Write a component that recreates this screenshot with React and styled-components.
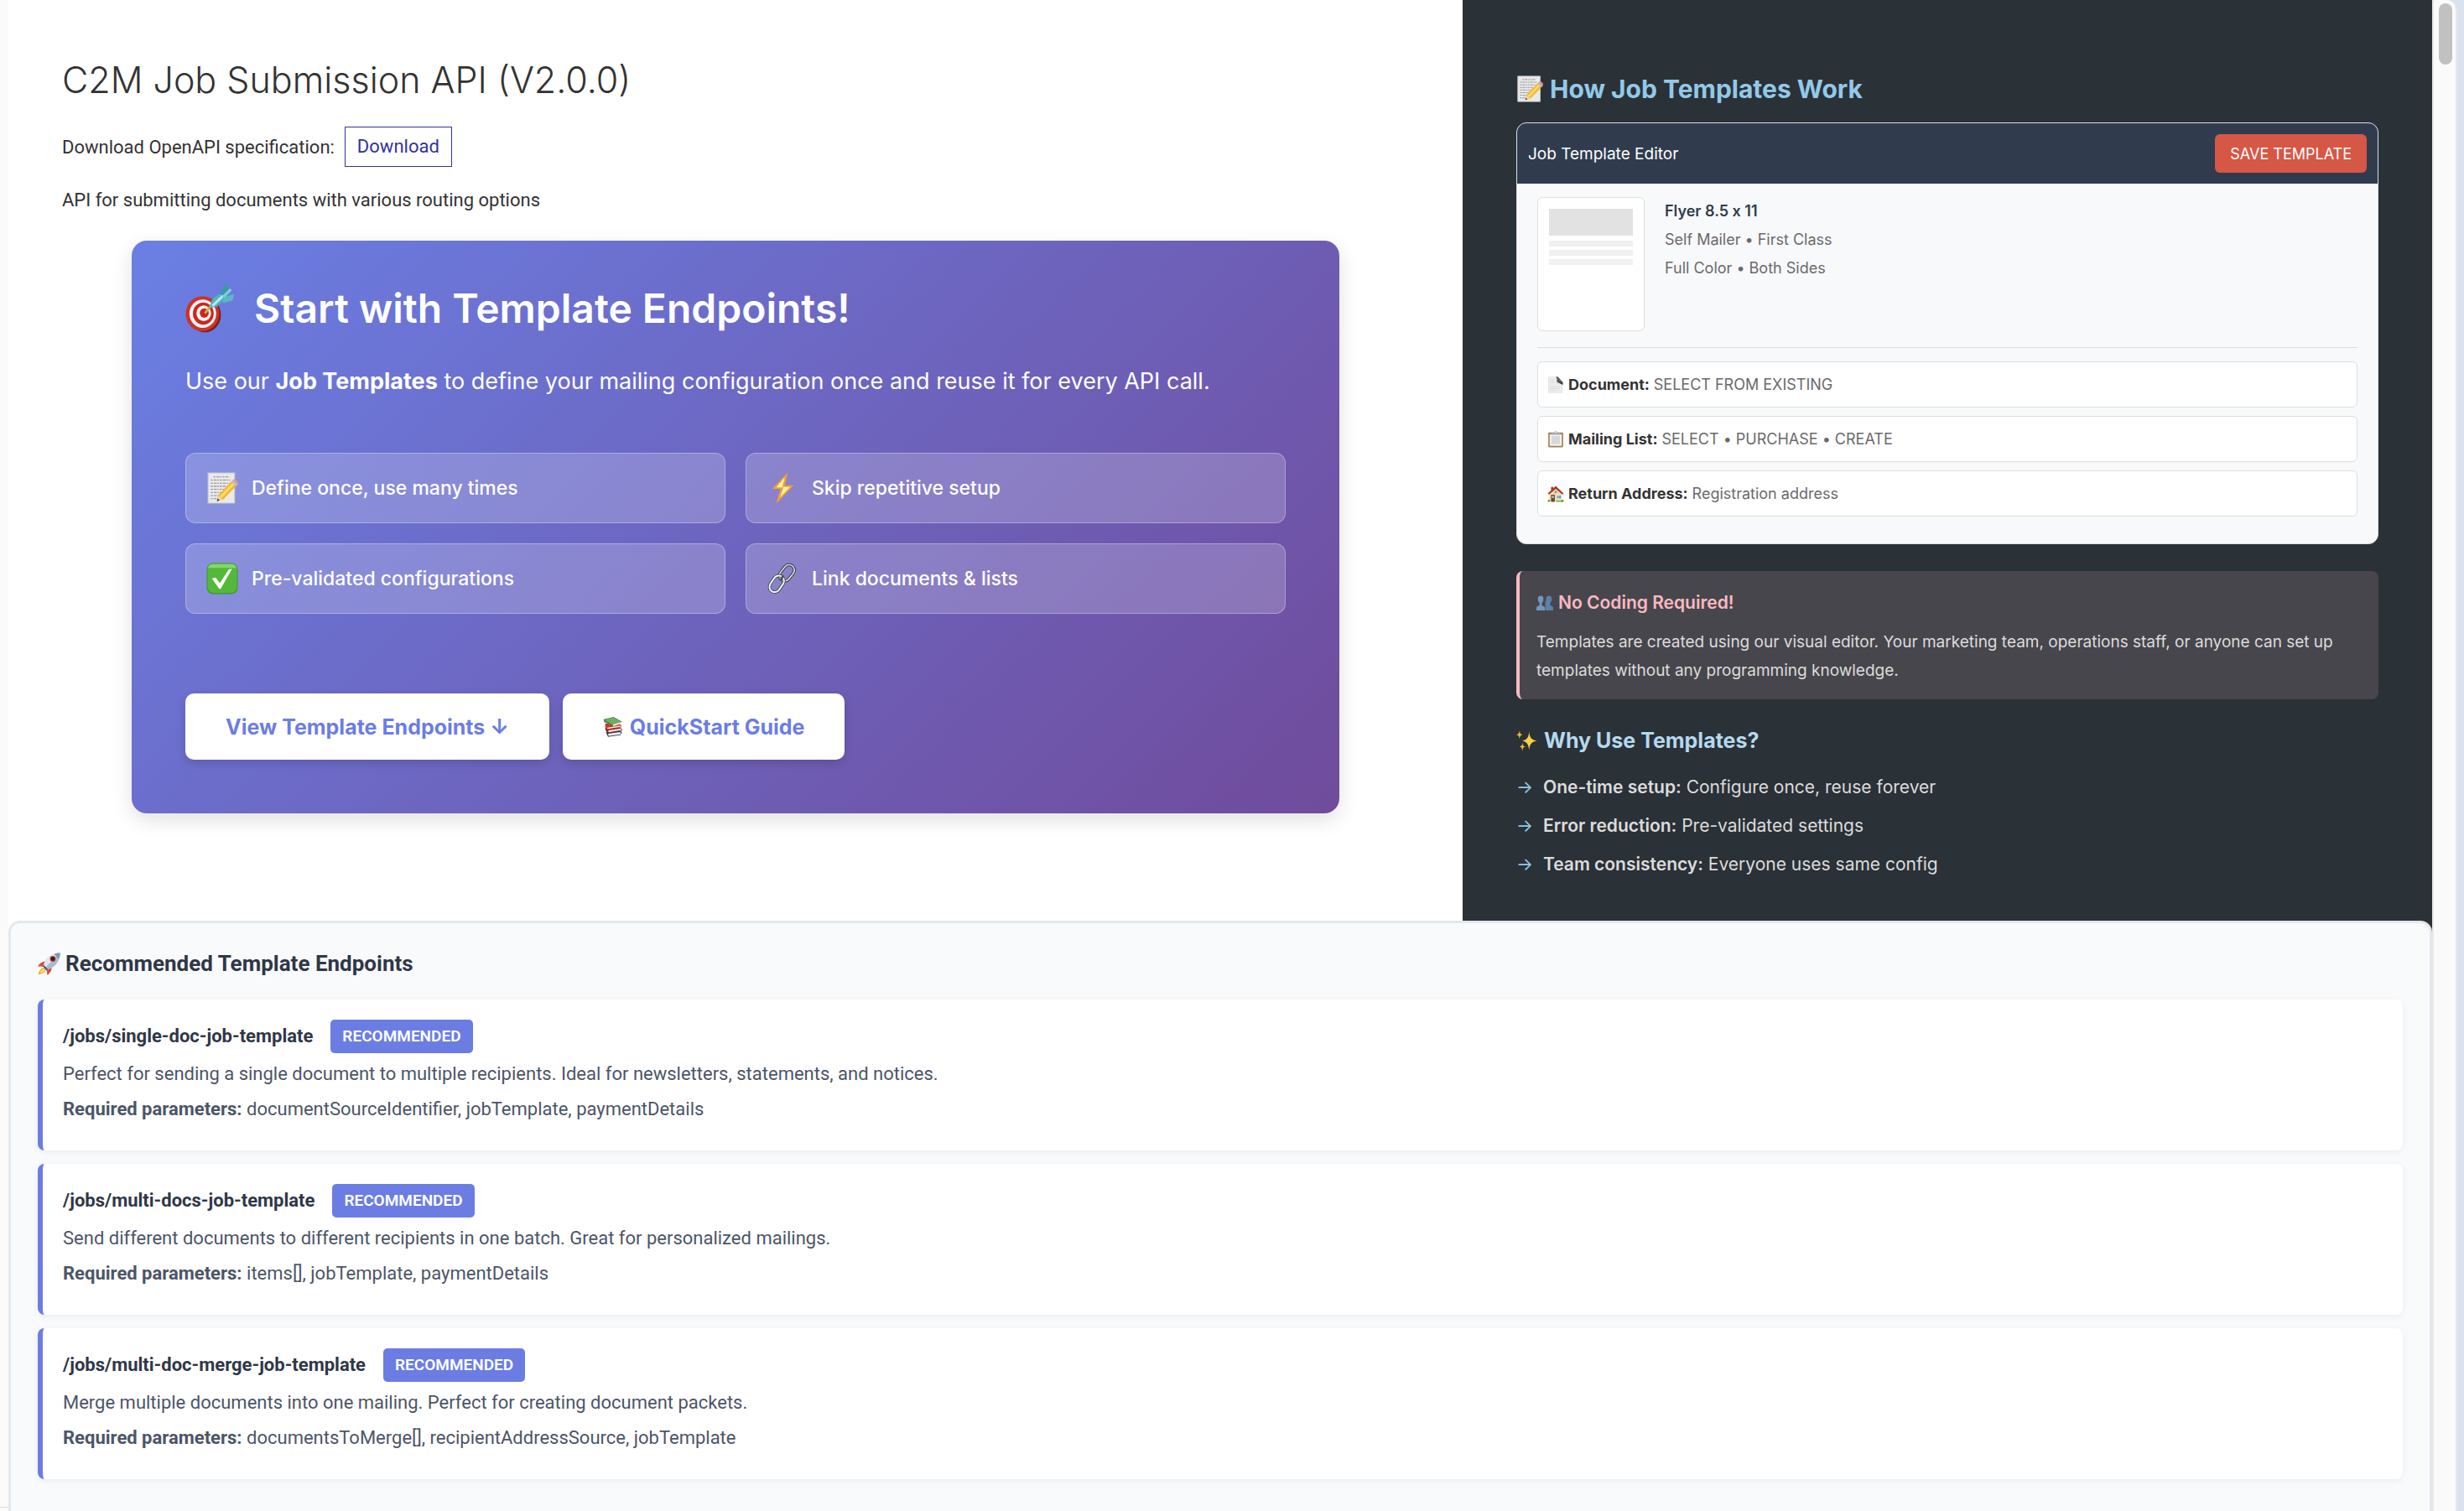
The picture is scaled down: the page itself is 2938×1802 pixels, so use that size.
import React from "react";
import styled, { createGlobalStyle } from "styled-components";

const sans = `Inter, "Liberation Sans", sans-serif`;
const roboto = `Roboto, "Liberation Sans", sans-serif`;

const GlobalStyle = createGlobalStyle`
  *, *::before, *::after { box-sizing: border-box; }
  html, body { margin: 0; padding: 0; }
  body { font-family: ${roboto}; color: #333; background: #fafafa; -webkit-font-smoothing: antialiased; }
  h1, h2, h3, p, ul { margin: 0; padding: 0; }
  ul { list-style: none; }
  a { text-decoration: none; }
`;

/* ---------- icons ---------- */

const Glyph = styled.svg.attrs({ viewBox: "0 0 36 36", "aria-hidden": true })`
  width: ${(p) => p.$size}px;
  height: ${(p) => p.$size}px;
  flex: none;
  display: block;
`;

const MemoIcon = ({ size }) => (
  <Glyph $size={size}>
    <path d="M2 1h30v34H2z" fill="#e9e9e9" stroke="#c9c9c9" strokeWidth="1" />
    <g stroke="#8b8b8b" strokeWidth="1" fill="none" strokeDasharray="2.4 1 3.4 .8 1.6 1">
      <path d="M8 5.500h18M5 9h22M5 12.500h21M5 16h17M5 19.500h15M5 23h14M5 26.500h11M5 30h8" />
    </g>
    <path d="M12 33l1.500-7L28 11l6 4.500L19 31z" fill="#f0b72f" />
    <path d="M15 27.500L29.500 12.500l2.200 1.600L17 29.500z" fill="#fbdc6a" />
    <path d="M12 33l1.500-7 5.500 5z" fill="#efcf9d" />
    <path d="M12 33l.7-3 2.300 1.900z" fill="#3a3532" />
    <path d="M28 11l2-2.200 6 4.600-2 2.200z" fill="#b8bcc0" />
    <path d="M30 8.800c1.800-2.600 7.300 1.400 5.800 4.400z" fill="#ee8b8f" />
  </Glyph>
);

const TargetIcon = ({ size }) => (
  <Glyph $size={size}>
    <ellipse cx="14.500" cy="22.600" rx="11.800" ry="13" fill="#7e1d18" />
    <ellipse cx="12.700" cy="21.800" rx="12.400" ry="13" fill="#cf3227" />
    <ellipse cx="12.900" cy="21.800" rx="9.900" ry="10.500" fill="#f7f3f1" />
    <ellipse cx="13.300" cy="21.700" rx="7.700" ry="8.200" fill="#c52a22" />
    <ellipse cx="13.600" cy="21.500" rx="5.400" ry="5.800" fill="#f7f3f1" />
    <ellipse cx="14" cy="21.300" rx="3.300" ry="3.500" fill="#c52a22" />
    <path d="M14.500 21.500L20 14.500" stroke="#d7b23b" strokeWidth="1.600" />
    <path d="M17.500 18l2.500-7 5.500-4 3 1.500-.5 3.500-4.500 4.500z" fill="#55b3bd" />
    <path d="M20 16l8-7.500" stroke="#b5eef0" strokeWidth="1.800" />
    <path d="M25.500 7.500L29 0l3.500 1.500-1 5.500z" fill="#3e98a4" />
    <path d="M28 9.500l8-2-1 4.500-7 2z" fill="#5bb9c2" />
    <path d="M27 9l6-6 1.500 1.500-5.500 5.500z" fill="#79cfd5" />
  </Glyph>
);

const BoltIcon = ({ size }) => (
  <Glyph $size={size}>
    <path d="M24 .5L6.500 19h9.300L11 35.500 30.500 15h-10z" fill="#f1a22f" />
    <path d="M20.500 6L11 17.200h8L15.500 28.500 26.500 16.800h-8.600z" fill="#fff2a0" />
  </Glyph>
);

const CheckIcon = ({ size }) => (
  <Glyph $size={size}>
    <rect x=".5" y=".5" width="35" height="35" rx="7" fill="#3f9a2c" />
    <rect x="1.500" y="1" width="33" height="33" rx="6.300" fill="#54b93a" />
    <path d="M7 2h22a5 5 0 0 1 5 4H2a5 5 0 0 1 5-4z" fill="#84d66b" />
    <path d="M25.500 7.500l3.500-.4-12.800 22.500h-1.600L6.500 18l4-1.300 4.700 6.500z" fill="#fff" />
  </Glyph>
);

const LinkIcon = ({ size }) => (
  <Glyph $size={size}>
    <g fill="none">
      <rect x="17" y="1.500" width="12" height="20" rx="6" transform="rotate(38 23 11.500)" stroke="#33363c" strokeWidth="3.400" />
      <rect x="17" y="1.500" width="12" height="20" rx="6" transform="rotate(38 23 11.500)" stroke="#d0dde5" strokeWidth="1.600" />
      <rect x="5.500" y="14" width="12" height="20" rx="6" transform="rotate(34 11.500 24)" stroke="#33363c" strokeWidth="3.400" />
      <rect x="5.500" y="14" width="12" height="20" rx="6" transform="rotate(34 11.500 24)" stroke="#e9f5fa" strokeWidth="2" />
      <path d="M16 20l3-5.500" stroke="#4a4d52" strokeWidth="2.500" />
    </g>
  </Glyph>
);

const BooksIcon = ({ size }) => (
  <Glyph $size={size}>
    <path d="M5 27l25-3 4 3.500-3 5-22 3z" fill="#27446f" />
    <path d="M9 30l22-3 1 4-22 3z" fill="#efe9de" />
    <path d="M4 19l22-3 8 5.500v3l-24 4.500-5-4z" fill="#8e2420" />
    <path d="M9.500 24l23-3.500v3L10 27.500z" fill="#f1ece2" />
    <path d="M4 12l24-1 5 4v3.500L8 23l-4-5z" fill="#c9372e" />
    <path d="M8 19l24-3.500v2L8 21.500z" fill="#efe9de" />
    <path d="M1 4L19 0l16 9-17 7.500L2 9z" fill="#4c8448" />
    <path d="M2 5l17-4 14 8-16 5z" fill="#72ab68" />
    <path d="M18 13.500l16-5v3L18 17z" fill="#eee9dc" />
  </Glyph>
);

const PageIcon = ({ size }) => (
  <Glyph $size={size}>
    <path d="M2 1h21l10 12v22H2z" fill="#dedede" />
    <path d="M3 2h17v14h12v18H3z" fill="#ececec" />
    <path d="M18 0c3 3 3 8 2 11l13 6V12L23 1z" fill="#5c5c5c" />
    <path d="M20 11l13 7V12z" fill="#3b3b3b" />
    <path d="M6 8h10M6 12h9M6 22h20M6 26h20M6 30h12" stroke="#cfcfcf" strokeWidth="1" />
  </Glyph>
);

const ClipboardIcon = ({ size }) => (
  <Glyph $size={size}>
    <rect x="2" y="3" width="32" height="32" rx="2" fill="#a58157" />
    <path d="M5 7h26v25H5z" fill="#f1f1ef" />
    <path d="M9 11h18v17H9z" fill="#d6d8da" />
    <path d="M8 4h6c0-5 8-5 8 0h6v4H8z" fill="#a7adb5" />
    <circle cx="18" cy="3" r="1.500" fill="#eef0f2" />
  </Glyph>
);

const HouseIcon = ({ size }) => (
  <Glyph $size={size}>
    <path d="M4 16L18 5l14 11v18H4z" fill="#f0d9a8" />
    <path d="M8 3h5v9H8z" fill="#8c4a38" />
    <path d="M1 17L18 1l17 16-2.500 2.500L18 7 3.500 19.500z" fill="#a93a2d" />
    <path d="M8 20h8v15H8z" fill="#71452b" />
    <path d="M10 22h4v5h-4z" fill="#a7cbe4" />
    <path d="M20 20h10v9H20z" fill="#fff" />
    <path d="M21 21h3.500v7H21zM25.500 21H29v7h-3.500z" fill="#5b93c7" />
    <circle cx="18" cy="14" r="2.500" fill="#5b93c7" />
    <circle cx="3.500" cy="33" r="2.500" fill="#5d9b3a" />
    <circle cx="32.500" cy="33" r="2.500" fill="#5d9b3a" />
    <path d="M19 33h14v2H19z" fill="#5d9b3a" />
  </Glyph>
);

const PeopleIcon = ({ size }) => (
  <Glyph $size={size}>
    <path d="M21 8c0-7 12-7 12 0 0 5-1.500 8-3.500 10.500V23l6.500 4v7H19V18.500z" fill="#5c80a6" />
    <path d="M3 8c0-7 12-7 12 0 0 5-1.500 8-3.500 10.500V23l6.500 4v7H0v-7l6.500-4v-4.500C4.500 16 3 13 3 8z" fill="#7297bd" />
  </Glyph>
);

const SparklesIcon = ({ size }) => (
  <Glyph $size={size}>
    <path d="M22 2c1 10 3.500 14 13.500 16C25.500 20 23 24 22 34c-1-10-3.500-14-12-16C18.500 16 21 12 22 2z" fill="#f8cf45" />
    <path d="M5.500 0c.6 5 1.700 6.500 5.500 7.500-3.800 1-4.900 2.500-5.500 7.500C4.900 10 3.800 8.500 0 7.500 3.800 6.500 4.900 5 5.500 0zM10.500 21c.6 5 1.500 6 5 7-3.500 1-4.400 2.500-5 7.500-.6-5-1.500-6.500-5-7.500 3.500-1 4.400-2 5-7z" fill="#f1b43a" />
  </Glyph>
);

const RocketIcon = ({ size }) => (
  <Glyph $size={size}>
    <path d="M10 24c-5 1-8 5-9 11 5-1 10-3 12-8z" fill="#f3a52f" />
    <path d="M9 26c-3 1-5 3-5.500 6.500C7 32 10 30 11.500 28z" fill="#fbe66a" />
    <path d="M12 14c-6 1-10 4-12 8 4 0 7-.5 9 1zM22 24c0 6-3 9-7 12 0-4 0-7-2-9z" fill="#de4a2b" />
    <path d="M35.500.5C26 .5 17 5 11.500 14L8.500 22l5.500 6 8-3.500C31 19 35.500 10 35.500.5z" fill="#a9bccf" />
    <path d="M35.500.5C26 .5 17 5 11.500 14L8.500 22l2.500 2.500z" fill="#dfe7ef" />
    <path d="M35.500.5c-3.500 0-6.500.5-9.500 2l7.500 7.500c1.500-3 2-6 2-9.500z" fill="#7f97ae" />
    <path d="M9.500 20l6.500 6.500-2 1.500-5.500-6z" fill="#3b4657" />
    <circle cx="24" cy="10" r="4.600" fill="#c93527" />
    <circle cx="24" cy="10" r="3" fill="#1e2530" />
  </Glyph>
);

/* ---------- page frame ---------- */

const Page = styled.div`
  display: flex;
  height: 100vh;
  overflow: hidden;
`;

const MenuEdge = styled.div`
  flex: none;
  width: 10px;
  background: #fafafa;
  display: flex;
  align-items: flex-end;

  &::after {
    content: "";
    flex: 1;
    height: 5px;
    border-top: 1px solid #dedede;
  }
`;

const Content = styled.main`
  flex: 1;
  min-width: 0;
  background: linear-gradient(to right, #fff 60%, #2a3137 60%);
`;

const ScrollTrack = styled.div`
  flex: none;
  width: 30px;
  padding: 4px 4px 4px 6px;
  background: #fafafa;
  border: 2px solid #e8e8e8;
  border-width: 0 2px;
  border-top-right-radius: 12px;
`;

const ScrollThumb = styled.div`
  height: 73px;
  width: 16px;
  border-radius: 8px;
  background: #c1c1c1;
`;

const WindowEdge = styled.div`
  flex: none;
  display: flex;
  width: 38px;
  background: #dae3eb;
`;

const Intro = styled.div`
  display: grid;
  grid-template-columns: 60% 40%;
`;

/* ---------- left column ---------- */

const Overview = styled.section`
  padding: 64px 64px 0;
`;

const PageTitle = styled.h1`
  font-family: ${sans};
  font-size: 43px;
  font-weight: 300;
  line-height: 62px;
  color: #333;
`;

const SpecRow = styled.p`
  display: flex;
  align-items: center;
  gap: 12px;
  margin-top: 25px;
  font-size: 22px;
`;

const DownloadLink = styled.a`
  padding: 0 14px;
  border: 1px solid #32329f;
  color: #32329f;
  line-height: 46px;
`;

const Lead = styled.p`
  margin-top: 22px;
  font-size: 22px;
  line-height: 36px;
`;

const Hero = styled.div`
  max-width: 1440px;
  margin: 30px auto 0;
  padding: 48px 64px 64px;
  border-radius: 18px;
  background: linear-gradient(135deg, #6a7fe4 0%, #704b9b 100%);
  box-shadow: 0 8px 24px rgba(0, 0, 0, 0.12);
  color: #fff;
  font-family: ${sans};
`;

const HeroTitle = styled.h2`
  display: flex;
  align-items: center;
  gap: 24px;
  font-size: 48px;
  font-weight: 600;
  line-height: 66px;
`;

const HeroText = styled.p`
  margin-top: 30px;
  font-size: 27px;
  line-height: 48px;
`;

const FeatureGrid = styled.ul`
  display: grid;
  grid-template-columns: 1fr 1fr;
  gap: 24px;
  margin-top: 61px;
`;

const Feature = styled.li`
  display: flex;
  align-items: center;
  gap: 16px;
  height: 84px;
  padding: 0 24px;
  border: 1px solid rgba(255, 255, 255, 0.3);
  border-radius: 12px;
  background: rgba(255, 255, 255, 0.2);
  font-size: 23px;
  font-weight: 500;
`;

const HeroActions = styled.div`
  display: flex;
  gap: 16px;
  margin-top: 95px;
`;

const HeroButton = styled.a`
  display: flex;
  align-items: center;
  gap: 8px;
  height: 79px;
  padding: 0 48px;
  border-radius: 10px;
  background: #fff;
  box-shadow: 0 4px 12px rgba(0, 0, 0, 0.15);
  color: #6b7de3;
  font-size: 25px;
  font-weight: 700;
`;

/* ---------- right column ---------- */

const Aside = styled.aside`
  padding: 80px 64px 44px;
  font-family: ${sans};
  font-feature-settings: "calt" 0;
`;

const AsideTitle = styled.h2`
  display: flex;
  align-items: center;
  gap: 8px;
  color: #93c9e8;
  font-size: 30px;
  font-weight: 700;
  line-height: 52px;
`;

const Editor = styled.div`
  margin-top: 14px;
  overflow: hidden;
  border: 1px solid #dedede;
  border-radius: 12px;
  background: #f8f9fb;
`;

const EditorBar = styled.div`
  display: flex;
  align-items: center;
  justify-content: space-between;
  padding: 13px;
  background: #303c4e;
  color: #fff;
  font-size: 19px;
`;

const SaveButton = styled.button`
  height: 46px;
  padding: 0 18px;
  border: 0;
  border-radius: 6px;
  background: #d65745;
  color: #fff;
  font-family: inherit;
  font-size: 18px;
`;

const EditorBody = styled.div`
  padding: 16px 24px 32px;
`;

const Summary = styled.div`
  display: flex;
  gap: 24px;
  padding-bottom: 19px;
  border-bottom: 1px solid #dedede;
`;

const Preview = styled.div`
  display: flex;
  flex-direction: column;
  gap: 4px;
  width: 128px;
  height: 160px;
  padding: 13px;
  border: 1px solid #dedede;
  border-radius: 6px;
  background: #fff;
`;

const PreviewImage = styled.div`
  height: 32px;
  margin-bottom: 2px;
  background: #e2e2e2;
`;

const PreviewLine = styled.div`
  height: 7px;
  background: #f0f0f0;
`;

const SummaryText = styled.div`
  color: #6a6a6a;
  font-size: 18px;
  line-height: 34px;
`;

const SummaryName = styled.strong`
  display: block;
  color: #303c4e;
  font-weight: 600;
`;

const Fields = styled.ul`
  display: grid;
  gap: 10px;
  margin-top: 16px;
`;

const Field = styled.li`
  display: flex;
  align-items: center;
  gap: 5px;
  height: 55px;
  padding: 0 11px;
  border: 1px solid #dedede;
  border-radius: 6px;
  background: #fff;
  color: #6a6a6a;
  font-size: 18px;

  strong { color: #333; font-weight: 700; }
`;

const Callout = styled.div`
  margin-top: 32px;
  padding: 21px 20px 17px;
  border-left: 4px solid #fbb9c3;
  border-radius: 8px;
  background: #47464c;
  color: #dcdcdc;
  font-size: 19px;
  line-height: 34px;
`;

const CalloutTitle = styled.h3`
  display: flex;
  align-items: center;
  gap: 6px;
  margin-bottom: 13px;
  color: #fbb9c3;
  font-size: 21px;
  font-weight: 600;
`;

const ReasonsTitle = styled.h3`
  display: flex;
  align-items: center;
  gap: 8px;
  margin-top: 31px;
  color: #b5d9ee;
  font-size: 25px;
  font-weight: 700;
  line-height: 36px;
`;

const Reasons = styled.ul`
  margin-top: 15px;
  color: #dcdcdc;
  font-size: 21px;
  line-height: 46px;

  li { display: flex; gap: 6px; }
  li::before { content: "→"; width: 26px; color: #93c9e8; }
  strong { font-weight: 600; }
`;

/* ---------- endpoints ---------- */

const Endpoints = styled.section`
  padding: 28px 32px 48px;
  border: 3px solid #e3e8ef;
  border-radius: 14px;
  background: #f9fafc;
`;

const EndpointsTitle = styled.h2`
  display: flex;
  align-items: center;
  gap: 6px;
  margin-bottom: 23px;
  color: #2f3747;
  font-size: 26px;
  font-weight: 700;
  line-height: 40px;
`;

const EndpointList = styled.div`
  display: grid;
  gap: 16px;
`;

const EndpointCard = styled.article`
  padding: 24px 24px 28px;
  border-left: 6px solid #6b7de3;
  border-radius: 8px;
  background: #fff;
  box-shadow: 0 2px 8px rgba(0, 0, 0, 0.06);
  color: #4c5567;
  font-size: 22px;
  line-height: 42px;
`;

const EndpointHead = styled.div`
  display: flex;
  align-items: center;
  gap: 21px;
  margin-bottom: 4px;
`;

const Path = styled.h3`
  color: #2f3747;
  font-size: 22px;
  font-weight: 700;
  line-height: 40px;
`;

const Badge = styled.span`
  padding: 0 14px;
  border-radius: 5px;
  background: #6b7de3;
  color: #fff;
  font-size: 19px;
  font-weight: 600;
  line-height: 40px;
`;

const features = [
  { icon: MemoIcon, text: "Define once, use many times" },
  { icon: BoltIcon, text: "Skip repetitive setup" },
  { icon: CheckIcon, text: "Pre-validated configurations" },
  { icon: LinkIcon, text: "Link documents & lists" },
];

const fields = [
  { icon: PageIcon, label: "Document:", value: "SELECT FROM EXISTING" },
  { icon: ClipboardIcon, label: "Mailing List:", value: "SELECT • PURCHASE • CREATE" },
  { icon: HouseIcon, label: "Return Address:", value: "Registration address" },
];

const reasons = [
  { label: "One-time setup:", text: "Configure once, reuse forever" },
  { label: "Error reduction:", text: "Pre-validated settings" },
  { label: "Team consistency:", text: "Everyone uses same config" },
];

const endpoints = [
  {
    path: "/jobs/single-doc-job-template",
    about: "Perfect for sending a single document to multiple recipients. Ideal for newsletters, statements, and notices.",
    params: "documentSourceIdentifier, jobTemplate, paymentDetails",
  },
  {
    path: "/jobs/multi-docs-job-template",
    about: "Send different documents to different recipients in one batch. Great for personalized mailings.",
    params: "items[], jobTemplate, paymentDetails",
  },
  {
    path: "/jobs/multi-doc-merge-job-template",
    about: "Merge multiple documents into one mailing. Perfect for creating document packets.",
    params: "documentsToMerge[], recipientAddressSource, jobTemplate",
  },
];

export default function App() {
  return (
    <Page>
      <GlobalStyle />
      <MenuEdge />
      <Content>
        <Intro>
          <Overview>
            <PageTitle>C2M Job Submission API (V2.0.0)</PageTitle>
            <SpecRow>
              Download OpenAPI specification:
              <DownloadLink href="#openapi">Download</DownloadLink>
            </SpecRow>
            <Lead>API for submitting documents with various routing options</Lead>
            <Hero>
              <HeroTitle>
                <TargetIcon size={58} />
                Start with Template Endpoints!
              </HeroTitle>
              <HeroText>
                Use our <strong>Job Templates</strong> to define your mailing configuration once and reuse it for every API call.
              </HeroText>
              <FeatureGrid>
                {features.map(({ icon: Icon, text }) => (
                  <Feature key={text}>
                    <Icon size={38} />
                    {text}
                  </Feature>
                ))}
              </FeatureGrid>
              <HeroActions>
                <HeroButton href="#endpoints">View Template Endpoints ↓</HeroButton>
                <HeroButton href="#quickstart">
                  <BooksIcon size={24} />
                  QuickStart Guide
                </HeroButton>
              </HeroActions>
            </Hero>
          </Overview>

          <Aside>
            <AsideTitle>
              <MemoIcon size={32} />
              How Job Templates Work
            </AsideTitle>
            <Editor>
              <EditorBar>
                <span>Job Template Editor</span>
                <SaveButton type="button">SAVE TEMPLATE</SaveButton>
              </EditorBar>
              <EditorBody>
                <Summary>
                  <Preview>
                    <PreviewImage />
                    <PreviewLine />
                    <PreviewLine />
                    <PreviewLine />
                  </Preview>
                  <SummaryText>
                    <SummaryName>Flyer 8.5 x 11</SummaryName>
                    <p>Self Mailer • First Class</p>
                    <p>Full Color • Both Sides</p>
                  </SummaryText>
                </Summary>
                <Fields>
                  {fields.map(({ icon: Icon, label, value }) => (
                    <Field key={label}>
                      <Icon size={20} />
                      <strong>{label}</strong>
                      {value}
                    </Field>
                  ))}
                </Fields>
              </EditorBody>
            </Editor>
            <Callout>
              <CalloutTitle>
                <PeopleIcon size={20} />
                No Coding Required!
              </CalloutTitle>
              <p>
                Templates are created using our visual editor. Your marketing team, operations staff, or anyone can set up
                templates without any programming knowledge.
              </p>
            </Callout>
            <ReasonsTitle>
              <SparklesIcon size={25} />
              Why Use Templates?
            </ReasonsTitle>
            <Reasons>
              {reasons.map(({ label, text }) => (
                <li key={label}>
                  <span><strong>{label}</strong> {text}</span>
                </li>
              ))}
            </Reasons>
          </Aside>
        </Intro>

        <Endpoints id="endpoints">
          <EndpointsTitle>
            <RocketIcon size={27} />
            Recommended Template Endpoints
          </EndpointsTitle>
          <EndpointList>
            {endpoints.map(({ path, about, params }) => (
              <EndpointCard key={path}>
                <EndpointHead>
                  <Path>{path}</Path>
                  <Badge>RECOMMENDED</Badge>
                </EndpointHead>
                <p>{about}</p>
                <p><strong>Required parameters:</strong> {params}</p>
              </EndpointCard>
            ))}
          </EndpointList>
        </Endpoints>
      </Content>
      <WindowEdge>
        <ScrollTrack>
          <ScrollThumb />
        </ScrollTrack>
      </WindowEdge>
    </Page>
  );
}
